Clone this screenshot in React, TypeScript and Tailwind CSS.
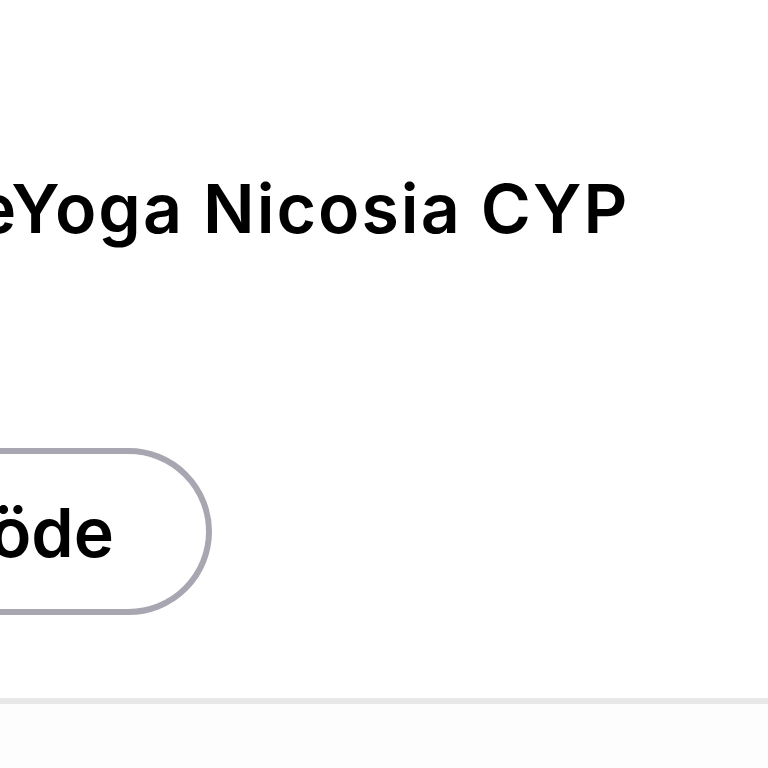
export default function App() {
  return (
    <div
      className="w-[768px] h-[768px] overflow-hidden bg-white flex flex-col"
      style={{ fontFamily: 'Inter, "Noto Sans", sans-serif' }}
    >
      <div className="pt-[168px] h-[438px]">
        <h1 className="-ml-[24px] whitespace-nowrap text-[68px] leading-[80px] font-semibold tracking-[2px] text-black">
          eYoga Nicosia CYP
        </h1>
      </div>
      <div className="h-[260px] pt-[10px]">
        <button className="-ml-[100px] h-[167px] w-[312px] rounded-full border-[6px] border-[#a8a6b0] bg-white flex items-center justify-end pr-[92px]">
          <span className="text-[68px] font-semibold text-black leading-none">öde</span>
        </button>
      </div>
      <div className="h-[6px] bg-[#e8e8e8]" />
      <div className="flex-1 bg-[#fdfdfd]" />
    </div>
  )
}
